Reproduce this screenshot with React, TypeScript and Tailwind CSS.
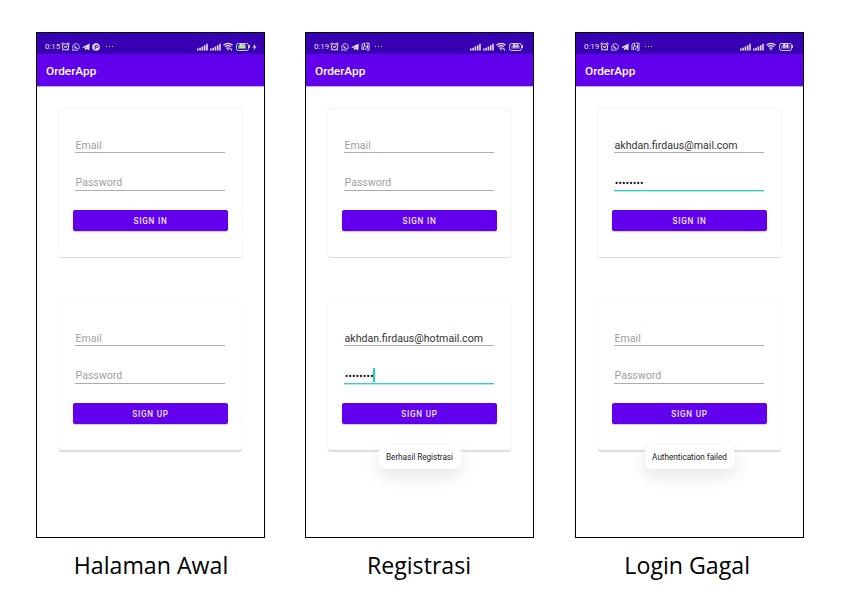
import React from "react";

type FormValues = { email?: string; dots?: boolean; caret?: boolean };

function AlarmIcon() {
  return (
    <svg width="9" height="9" viewBox="0 0 18 18" fill="none" stroke="currentColor" strokeWidth="2.1">
      <circle cx="9" cy="9.6" r="6.2" />
      <path d="M0.8 4.8 4.8 1.2M17.2 4.8 13.2 1.2M4.4 14.2 2.8 16.8M13.6 14.2 15.2 16.8M6 8.6 9 11l3.2-3" />
    </svg>
  );
}

function WhatsappIcon() {
  return (
    <svg width="8" height="8" viewBox="0 0 16 16" fill="none" stroke="currentColor" strokeWidth="1.7">
      <path d="M1.2 14.8 2.2 11.2A6.7 6.7 0 1 1 5 13.9Z" />
      <path d="M5.4 5.2C5.4 8.4 7.9 10.8 10.9 10.8" strokeWidth="2.2" />
    </svg>
  );
}

function TelegramIcon() {
  return (
    <svg width="8" height="8" viewBox="0 0 16 16" fill="currentColor">
      <path d="M0.2 8.6 15.4 1 14.6 14.8 9.4 12.2 6.2 14.6 5.6 10.8 10.4 6.8 4.4 10Z" />
    </svg>
  );
}

function ParkIcon() {
  return (
    <svg width="8" height="8" viewBox="0 0 16 16">
      <circle cx="8" cy="8" r="7.6" fill="currentColor" />
      <path d="M6.4 13V5.2H10A2 2 0 0 1 10 9.2H8.4" fill="none" stroke="#3700b3" strokeWidth="1.9" />
    </svg>
  );
}

function ReaderIcon() {
  return (
    <svg width="9" height="9" viewBox="0 0 18 18" fill="none" stroke="currentColor" strokeWidth="1.9">
      <path d="M2 16V4.5L7 2V8M5 16V9.5L9 7.5 11.5 11 7.5 16M9.5 2.2H16V16.4H11.5M13 5V13" />
    </svg>
  );
}

function SignalIcon() {
  return (
    <svg width="11" height="8" viewBox="0 0 11 8" fill="currentColor">
      <path d="M0 5.6h1.6V7.4H0zM2.3 4.8h1.6v2.6H2.3zM4.6 3.5h1.6V7.4H4.6zM6.9 2.2h1.6V7.4H6.9zM9.2 0.8h1.6v6.6H9.2z" />
    </svg>
  );
}

function WifiIcon({ linked }: { linked: boolean }) {
  return (
    <svg width="10" height="9" viewBox="0 0 20 18" fill="none" stroke="currentColor" strokeWidth="2.5">
      <path d="M1 6.4C6 1.4 14 1.4 19 6.4M4 9.8C7.4 6.6 12.6 6.6 16 9.8M7 13C8.8 11.4 11.2 11.4 13 13" />
      <circle cx="10" cy="15.4" r="1.5" fill="currentColor" stroke="none" />
      {linked && <path d="M14.6 12.4 17.8 16.6" strokeWidth="2.4" />}
    </svg>
  );
}

function Battery({ charging }: { charging: boolean }) {
  return (
    <span className="flex items-center">
      <span className="flex h-[8px] w-[13px] items-center justify-center rounded-[2.5px] border border-[#d5cbf0] p-px">
        <span
          className={
            "flex h-[4px] items-center justify-center rounded-[1px] font-bold text-[5px] leading-none text-white " +
            (charging ? "mr-auto w-[8px] bg-[#55b544]" : "w-[9px] bg-[#7452cc]")
          }
        >
          {charging ? "80" : "84"}
        </span>
      </span>
      <span className="h-[3px] w-px bg-[#d5cbf0]" />
      {charging && (
        <svg className="ml-[2px]" width="5" height="8" viewBox="0 0 10 16" fill="currentColor">
          <path d="M6.2 1.5 1 9H4.4L3.4 14.5 9 6.8H5.6Z" />
        </svg>
      )}
    </span>
  );
}

function StatusBar({ time, charging, fourth, linked }: { time: string; charging: boolean; fourth: "park" | "reader"; linked: boolean }) {
  return (
    <div className={"flex h-[21px] items-center bg-[#3700b3] pt-[6px] pl-[8px] text-[#e4ddf6] " + (charging ? "pr-[7px]" : "pr-[10px]")}>
      <span className="w-[16px] whitespace-nowrap text-[8px] leading-none tracking-[-0.1px]">{time}</span>
      <span className="flex items-center gap-[2px]">
        <AlarmIcon />
        <WhatsappIcon />
        <TelegramIcon />
        {fourth === "park" ? <ParkIcon /> : <ReaderIcon />}
      </span>
      <span className={"flex gap-[2px] " + (fourth === "park" ? "ml-[6px]" : "ml-[5px]")}>
        <i className="size-px bg-current" />
        <i className="size-px bg-current" />
        <i className="size-px bg-current" />
      </span>
      <span className="ml-auto flex items-center gap-[2px]">
        <SignalIcon />
        <SignalIcon />
        <WifiIcon linked={linked} />
        <span className="pl-px">
          <Battery charging={charging} />
        </span>
      </span>
    </div>
  );
}

function PasswordDots() {
  return (
    <svg width="29" height="4" viewBox="0 0 29 4" fill="#1c1c1c">
      {Array.from({ length: 8 }, (_, i) => (
        <circle key={i} cx={1.6 + i * 3.6} cy="2" r="1.15" />
      ))}
    </svg>
  );
}

function Card({ label, values, raised }: { label: string; values: FormValues; raised?: boolean }) {
  return (
    <section
      className={
        "flex h-[148px] flex-col rounded-[2px] bg-white px-[14px] pt-[26px] " +
        (raised
          ? "shadow-[0_1.5px_1px_rgba(0,0,0,0.13),0_0_1.5px_rgba(0,0,0,0.09)]"
          : "shadow-[0_0.5px_1px_rgba(0,0,0,0.12),0_0_1.5px_rgba(0,0,0,0.12)]")
      }
    >
      <div className="mr-[3px] ml-[2px] flex h-[18px] items-center border-b border-[#adadad] pt-[4px] pl-[0.5px] text-[10.6px]">
        <span className={values.email ? "text-[#333]" : "text-[#a0a0a0]"}>{values.email ?? "Email"}</span>
      </div>
      <div
        className={
          "mr-[3px] ml-[2px] mt-[20px] flex h-[18px] items-center border-b pl-[0.5px] text-[10.6px] " +
          (values.dots ? "border-[#35d0c1] shadow-[0_1px_0_rgba(53,208,193,0.4)]" : "border-[#adadad] pt-[3px]")
        }
      >
        {values.dots ? (
          <>
            <span className="flex pt-[2px]">
              <PasswordDots />
            </span>
            {values.caret && <span className="-ml-[0.5px] h-[14px] w-[1.5px] bg-[#1fcdbb]" />}
          </>
        ) : (
          <span className="text-[#a0a0a0]">Password</span>
        )}
      </div>
      <button className="mt-[19px] h-[21px] rounded-[2px] bg-[#6200ee] pt-[2px] text-[8.2px] font-medium tracking-[0.75px] text-[#eee3ff] shadow-[0_1px_1px_rgba(0,0,0,0.2)]">
        {label}
      </button>
    </section>
  );
}

type PhoneProps = {
  caption: string;
  captionClass: string;
  time: string;
  charging?: boolean;
  fourth: "park" | "reader";
  linked?: boolean;
  signIn?: FormValues;
  signUp?: FormValues;
  toast?: string;
};

function Phone({ caption, captionClass, time, charging = false, fourth, linked = false, signIn = {}, signUp = {}, toast }: PhoneProps) {
  return (
    <figure className="flex w-[229px] flex-col items-center">
      <div className="relative flex h-[506px] w-full flex-col border border-black bg-white font-[Roboto,sans-serif]">
        <StatusBar time={time} charging={charging} fourth={fourth} linked={linked} />
        <header className="flex h-[33px] items-center border-b border-[#c9b5ec] bg-[#6200ee] pt-[3px] pl-[9px] text-[11.8px] font-medium text-white">
          OrderApp
        </header>
        <main className="flex flex-col gap-[45px] px-[22px] pt-[22px]">
          <Card label="SIGN IN" values={signIn} />
          <Card label="SIGN UP" values={signUp} raised />
        </main>
        {toast && (
          <div className="absolute top-[412px] left-1/2 flex h-[24px] -translate-x-1/2 items-center rounded-[7px] bg-white px-[8px] text-[8.2px] tracking-[-0.03px] whitespace-nowrap text-[#222] shadow-[0_7px_18px_rgba(0,0,0,0.1),0_0_2px_rgba(0,0,0,0.04)]">
            {toast}
          </div>
        )}
      </div>
      <figcaption
        className={"mt-[9px] scale-x-[0.965] text-[24px] leading-[36px] whitespace-nowrap text-black font-['Open_Sans',sans-serif] " + captionClass}
      >
        {caption}
      </figcaption>
    </figure>
  );
}

export default function App() {
  return (
    <div className="flex h-[595px] w-[842px] bg-white pt-[32px] pl-[36px]">
      <Phone caption="Halaman Awal" captionClass="pl-[2px]" time="0:15" charging fourth="park" linked />
      <div className="w-[40px]" />
      <Phone
        caption="Registrasi"
        captionClass=""
        time="0:19"
        fourth="reader"
        linked
        signUp={{ email: "akhdan.firdaus@hotmail.com", dots: true, caret: true }}
        toast="Berhasil Registrasi"
      />
      <div className="w-[41px]" />
      <Phone
        caption="Login Gagal"
        captionClass="pr-[5px]"
        time="0:19"
        fourth="reader"
        signIn={{ email: "akhdan.firdaus@mail.com", dots: true }}
        toast="Authentication failed"
      />
    </div>
  );
}
